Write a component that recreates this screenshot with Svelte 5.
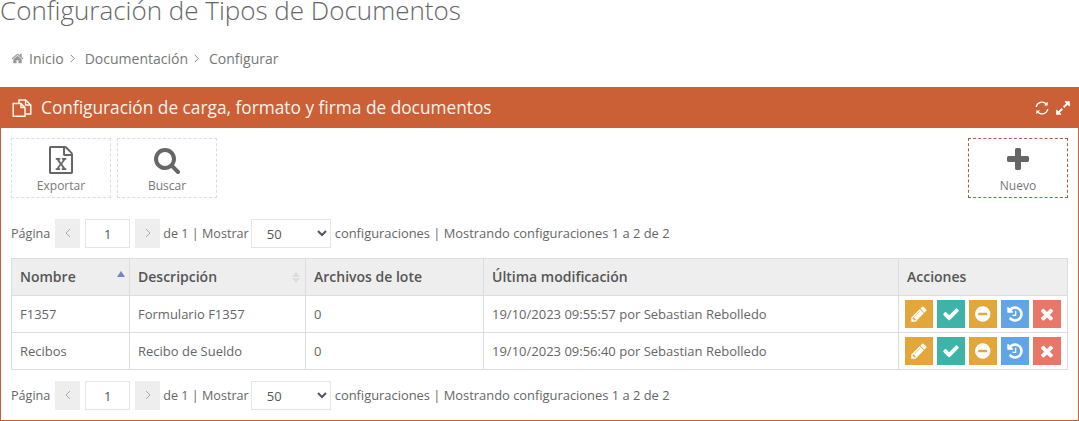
<script>
  const icons = {
    home: ['0 0 1792 1792', 'M1472 992v480q0 26-19 45t-45 19h-384v-384h-256v384h-384q-26 0-45-19t-19-45v-480q0-1 .5-3t.5-3l575-474 575 474q1 2 1 6zm223-69l-62 74q-8 9-21 11h-3q-13 0-21-7l-692-577-692 577q-12 8-24 7-13-2-21-11l-62-74q-8-10-7-23.500t11-21.500l719-599q32-26 76-26t76 26l244 204v-195q0-14 9-23t23-9h192q14 0 23 9t9 23v408l219 182q10 8 11 21.500t-7 23.500z'],
    expand: ['0 0 1792 1792', 'M883 1056q0 13-10 23l-332 332 144 144q19 19 19 45t-19 45-45 19h-448q-26 0-45-19t-19-45v-448q0-26 19-45t45-19 45 19l144 144 332-332q10-10 23-10t23 10l114 114q10 10 10 23zm781-864v448q0 26-19 45t-45 19-45-19l-144-144-332 332q-10 10-23 10t-23-10l-114-114q-10-10-10-23t10-23l332-332-144-144q-19-19-19-45t19-45 45-19h448q26 0 45 19t19 45z'],
    excel: ['0 0 1536 1792', 'M1468 380q28 28 48 76t20 88v1152q0 40-28 68t-68 28h-1344q-40 0-68-28t-28-68v-1600q0-40 28-68t68-28h896q40 0 88 20t76 48zm-444-244v376h376q-10-29-22-41l-313-313q-12-12-41-22zm384 1528v-1024h-416q-40 0-68-28t-28-68v-416h-768v1536h1280zm-979-234v106h281v-106h-75l103-161q5-7 10-16.500t7.500-13.500 3.500-4h2q1 4 5 10 2 4 4.500 7.500t6 8.500 6.500 9l107 161h-76v106h291v-106h-68l-192-273 195-282h67v-107h-279v107h74l-103 159q-4 7-10 16.500t-9 13.500l-2 3h-2q-1-4-5-10-6-11-17-23l-106-159h76v-107h-290v107h68l189 272-194 283h-68z'],
    search: ['0 0 1792 1792', 'M1216 832q0-185-131.500-316.500t-316.500-131.500-316.500 131.500-131.500 316.500 131.500 316.500 316.500 131.500 316.500-131.500 131.500-316.500zm512 832q0 52-38 90t-90 38q-54 0-90-38l-343-342q-179 124-399 124-143 0-273.500-55.500t-225-150-150-225-55.500-273.500 55.500-273.500 150-225 225-150 273.500-55.500 273.500 55.500 225 150 150 225 55.500 273.500q0 220-124 399l343 343q37 37 37 90z'],
    plus: ['0 0 1792 1792', 'M1600 736v192q0 40-28 68t-68 28h-416v416q0 40-28 68t-68 28h-192q-40 0-68-28t-28-68v-416h-416q-40 0-68-28t-28-68v-192q0-40 28-68t68-28h416v-416q0-40 28-68t68-28h192q40 0 68 28t28 68v416h416q40 0 68 28t28 68z'],
    pencil: ['0 0 1792 1792', 'M491 1536l91-91-235-235-91 91v107h128v128h107zm523-928q0-22-22-22-10 0-17 7l-542 542q-7 7-7 17 0 22 22 22 10 0 17-7l542-542q7-7 7-17zm-54-192l416 416-832 832h-416v-416zm683 96q0 53-37 90l-166 166-416-416 166-165q36-38 90-38 53 0 91 38l235 234q37 39 37 91z'],
    check: ['0 0 1792 1792', 'M1671 566q0 40-28 68l-724 724-136 136q-28 28-68 28t-68-28l-136-136-362-362q-28-28-28-68t28-68l136-136q28-28 68-28t68 28l294 295 656-657q28-28 68-28t68 28l136 136q28 28 28 68z'],
    minus: ['0 0 1536 1792', 'M1216 960v-128q0-26-19-45t-45-19h-768q-26 0-45 19t-19 45v128q0 26 19 45t45 19h768q26 0 45-19t19-45zm320-64q0 209-103 385.500t-279.500 279.500-385.500 103-385.500-103-279.500-279.500-103-385.500 103-385.500 279.500-279.500 385.500-103 385.500 103 279.500 279.500 103 385.500z'],
    history: ['0 0 1792 1792', 'M1664 896q0 156-61 298t-164 245-245 164-298 61q-172 0-327-72.500t-264-204.500q-7-10-6.500-22.500t8.500-20.500l137-138q10-9 25-9 16 2 23 12 73 95 179 147t225 52q104 0 198.500-40.500t163.500-109.500 109.500-163.500 40.500-198.500-40.500-198.500-109.500-163.500-163.500-109.500-198.500-40.500q-98 0-188 35.500t-160 101.500l137 138q31 30 14 69-17 40-59 40h-448q-26 0-45-19t-19-45v-448q0-42 40-59 39-17 69 14l130 129q107-101 244.500-156.500t284.500-55.500q156 0 298 61t245 164 164 245 61 298zm-640-288v448q0 14-9 23t-23 9h-320q-14 0-23-9t-9-23v-64q0-14 9-23t23-9h224v-352q0-14 9-23t23-9h64q14 0 23 9t9 23z'],
    times: ['0 0 1792 1792', 'M1490 1322q0 40-28 68l-136 136q-28 28-68 28t-68-28l-294-294-294 294q-28 28-68 28t-68-28l-136-136q-28-28-28-68t28-68l294-294-294-294q-28-28-28-68t28-68l136-136q28-28 68-28t68 28l294 294 294-294q28-28 68-28t68 28l136 136q28 28 28 68t-28 68l-294 294 294 294q28 28 28 68z']
  };

  const rows = [
    { nombre: 'F1357', descripcion: 'Formulario F1357', lote: 0, fecha: '19/10/2023 09:55:57 por Sebastian Rebolledo' },
    { nombre: 'Recibos', descripcion: 'Recibo de Sueldo', lote: 0, fecha: '19/10/2023 09:56:40 por Sebastian Rebolledo' }
  ];

  const acciones = [
    { icon: 'pencil', color: 'yellow' },
    { icon: 'check', color: 'teal' },
    { icon: 'minus', color: 'yellow' },
    { icon: 'history', color: 'blue' },
    { icon: 'times', color: 'red' }
  ];
</script>

{#snippet icon(name, size)}
  <svg class="icon" viewBox={icons[name][0]} height={size} fill="currentColor"><path d={icons[name][1]} /></svg>
{/snippet}

{#snippet chevron()}
  <svg class="chev" viewBox="0 0 5 9" width="5" height="9"><path d="M.7.8 4.3 4.5.7 8.2" fill="none" stroke="currentColor" /></svg>
{/snippet}

{#snippet pager(cls)}
  <div class="pager {cls}">
    <span class="tight">Página</span>
    <button class="arrow first">
      <svg viewBox="0 0 6 10" width="6" height="10"><path d="M5 1 1 5l4 4" fill="none" stroke="currentColor" /></svg>
    </button>
    <input class="page-input" type="text" value="1" />
    <button class="arrow next">
      <svg viewBox="0 0 6 10" width="6" height="10"><path d="M1 1l4 4-4 4" fill="none" stroke="currentColor" /></svg>
    </button>
    <span class="tight">de 1 | Mostrar</span>
    <select class="size">
      <option>50</option>
    </select>
    <span class="info">configuraciones | Mostrando configuraciones 1 a 2 de 2</span>
  </div>
{/snippet}

<h1>Configuración de Tipos de Documentos</h1>

<nav class="crumbs">
  <span class="home">{@render icon('home', 13)}</span>
  <span>Inicio</span>
  {@render chevron()}
  <span>Documentación</span>
  {@render chevron()}
  <span>Configurar</span>
</nav>

<section class="panel">
  <header>
    <span class="title">
      <svg viewBox="0 0 20 18" width="20" height="18" fill="none" stroke="currentColor" stroke-width="1.5">
        <path d="M1.2 4.6H9L13 8.6V17.2H1.2Z" />
        <path d="M9 4.6V8.6H13" />
        <path d="M7 4.6V.9H13.6L18.8 6V15H13" />
        <path d="M13.6.9V6H18.8" />
      </svg>
      Configuración de carga, formato y firma de documentos
    </span>
    <span class="tools">
      <svg viewBox="0 0 14 14" width="14" height="14" fill="none" stroke="currentColor" stroke-width="1.4">
        <path d="M1.2 6A5.900 5.900 0 0 1 11.300 3" />
        <path d="M12.800 8A5.900 5.900 0 0 1 2.700 11" />
        <path d="M12.700.8V4.600H8.900Z" fill="currentColor" stroke="none" />
        <path d="M1.300 13.200V9.400H5.100Z" fill="currentColor" stroke="none" />
      </svg>
      {@render icon('expand', 16)}
    </span>
  </header>

  <div class="body">
    <div class="toolbar">
      <button class="tool">{@render icon('excel', 28)}<span>Exportar</span></button>
      <button class="tool">{@render icon('search', 28)}<span>Buscar</span></button>
      <button class="tool new">{@render icon('plus', 28)}<span>Nuevo</span></button>
    </div>

    {@render pager('top')}

    <table>
      <thead>
        <tr>
          <th class="c1">Nombre<span class="sort asc"></span></th>
          <th class="c2">Descripción<span class="sort both"></span></th>
          <th class="c3">Archivos de lote</th>
          <th class="c4">Última modificación</th>
          <th>Acciones</th>
        </tr>
      </thead>
      <tbody>
        {#each rows as row}
          <tr>
            <td>{row.nombre}</td>
            <td>{row.descripcion}</td>
            <td>{row.lote}</td>
            <td>{row.fecha}</td>
            <td class="actions">
              {#each acciones as a}
                <button class="act {a.color}">{@render icon(a.icon, 18)}</button>
              {/each}
            </td>
          </tr>
        {/each}
      </tbody>
    </table>

    {@render pager('bottom')}
  </div>
</section>

<style>
  :global(body) {
    font-family: 'Open Sans', sans-serif;
    font-size: 13px;
    color: #555;
    background: #fff;
    overflow: hidden;
  }
  .icon { display: block; }
  h1 {
    margin: -9px 0 0 0;
    font-size: 26px;
    line-height: 38px;
    font-weight: 300;
    color: #666;
  }
  .crumbs {
    display: flex;
    align-items: center;
    height: 20px;
    margin: 19px 0 0 11px;
    font-size: 14px;
    color: #777;
  }
  .crumbs .home { margin-right: 5px; color: #999; }
  .chev { margin: 1px 10px 0 6px; color: #888; }
  .panel {
    margin-top: 19px;
    height: 334px;
    box-sizing: border-box;
    border: 1px solid #c86039;
    border-top: 0;
  }
  header {
    height: 41px;
    margin: 0 -1px;
    padding: 0 8px 0 12px;
    background: #cb6037;
    color: #fff;
    display: flex;
    align-items: center;
    justify-content: space-between;
  }
  .title { display: flex; align-items: center; gap: 9px; font-size: 17.3px; color: #fdf3ec; }
  .tools { display: flex; align-items: center; gap: 6px; }
  .body { padding: 10px 10px 0; }
  .toolbar { display: flex; gap: 6px; height: 60px; }
  .tool {
    width: 100px;
    height: 60px;
    padding: 7px 0 0;
    box-sizing: border-box;
    border: 1px dashed #ddd;
    background: #fff;
    color: #666;
    font: inherit;
    font-size: 12px;
    display: flex;
    flex-direction: column;
    align-items: center;
    gap: 4px;
  }
  .tool span { color: #777; line-height: 16px; }
  .new { margin-left: auto; border-color: #a5623f; }
  .pager {
    display: flex;
    align-items: center;
    height: 30px;
    font-size: 13px;
    color: #666;
  }
  .tight { font-size: 12.6px; }
  .info { font-size: 12.9px; }
  .pager.top { margin-top: 20px; }
  .pager.bottom { margin-top: 10px; }
  .arrow {
    width: 25px;
    height: 29px;
    padding: 0;
    border: 0;
    background: #eee;
    color: #aaa;
    display: flex;
    align-items: center;
    justify-content: center;
  }
  .arrow.first { margin: 0 5px; }
  .arrow.next { margin: 0 3px 0 5px; }
  .page-input {
    width: 45px;
    height: 29px;
    padding: 2px 0 0;
    box-sizing: border-box;
    border: 1px solid #e5e5e5;
    font: inherit;
    font-size: 13px;
    color: #555;
    text-align: center;
  }
  .size {
    width: 80px;
    height: 29px;
    margin: 0 4px 0 2px;
    padding: 2px 0 0 11px;
    box-sizing: border-box;
    border: 1px solid #e5e5e5;
    border-radius: 0;
    background: #fff;
    font: inherit;
    font-size: 13px;
    color: #555;
  }
  table {
    width: 100%;
    margin-top: 10px;
    border-collapse: collapse;
    table-layout: fixed;
  }
  th, td {
    height: 37px;
    padding: 0 8px;
    box-sizing: border-box;
    border: 1px solid #ddd;
    text-align: left;
    font-size: 13px;
    color: #666;
    white-space: nowrap;
  }
  th {
    position: relative;
    padding-bottom: 2px;
    background: #eee;
    font-size: 14px;
    font-weight: 600;
    color: #555;
  }
  .c1 { width: 118px; }
  .c2 { width: 176px; }
  .c3 { width: 178px; }
  .c4 { width: 415px; }
  .sort { position: absolute; right: 4px; top: 12px; width: 0; height: 0; border: 4px solid transparent; border-top: 0; }
  .sort.asc { border-bottom: 6px solid #7a80cc; }
  .sort.both { right: 5px; top: 13px; border-bottom: 5px solid #ddd; }
  .sort.both::after {
    content: '';
    position: absolute;
    left: -4px;
    top: 6px;
    border: 4px solid transparent;
    border-bottom: 0;
    border-top: 5px solid #ddd;
  }
  .actions { padding: 0 6px; font-size: 0; }
  .act {
    display: inline-flex;
    align-items: center;
    justify-content: center;
    width: 28px;
    height: 28px;
    margin-right: 4px;
    padding: 0;
    border: 0;
    color: #fff;
    vertical-align: middle;
  }
  .act:last-child { margin-right: 0; }
  .yellow { background: #e2a63b; }
  .teal { background: #3fb3a8; }
  .blue { background: #62a5e6; }
  .red { background: #e8776a; }
</style>
